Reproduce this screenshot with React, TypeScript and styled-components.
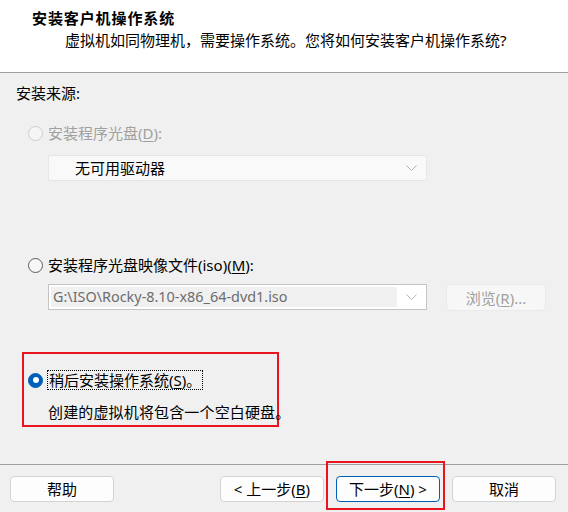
import React from "react";
import styled, { createGlobalStyle } from "styled-components";

const Global = createGlobalStyle`
  html, body { margin: 0; padding: 0; background: #f0f0f0; }
  body {
    font-family: "Noto Sans", "Noto Sans CJK SC", sans-serif;
    font-size: 15px;
    color: #000;
  }
  * { box-sizing: border-box; }
`;

const Window = styled.div`
  width: 568px;
  height: 512px;
  display: flex;
  flex-direction: column;
  background: #f0f0f0;
  overflow: hidden;
`;

const Header = styled.header`
  flex: none;
  height: 73px;
  background: #fff;
  border-bottom: 1px solid #a0a0a0;
  padding-top: 8px;
  display: flex;
  flex-direction: column;
  gap: 2px;
`;

const Title = styled.div`
  padding-left: 32px;
  font-weight: 700;
  font-size: 15px;
  letter-spacing: 0.9px;
  line-height: 20px;
`;

const Subtitle = styled.div`
  padding-left: 65px;
  line-height: 20px;
`;

const Body = styled.main`
  flex: 1;
  padding: 10px 16px 0;
  display: flex;
  flex-direction: column;
`;

const Label = styled.div`
  line-height: 20px;
`;

const RadioRow = styled.div<{ $top: number; $disabled?: boolean }>`
  margin-top: ${(p) => p.$top}px;
  padding-left: 12px;
  height: 20px;
  display: flex;
  align-items: center;
  gap: 5px;
  line-height: 20px;
  color: ${(p) => (p.$disabled ? "#a0a0a0" : "#000")};
  white-space: nowrap;
`;

const Radio = styled.span<{ $checked?: boolean; $disabled?: boolean }>`
  flex: none;
  width: 15px;
  height: 15px;
  border-radius: 50%;
  border: 1px solid
    ${(p) => (p.$checked ? "#005fb8" : p.$disabled ? "#cccccc" : "#5a5a5a")};
  background: ${(p) => (p.$checked ? "#005fb8" : p.$disabled ? "#f5f5f5" : "#f7f7f7")};
  display: flex;
  align-items: center;
  justify-content: center;
  &::after {
    content: "";
    display: ${(p) => (p.$checked ? "block" : "none")};
    width: 6px;
    height: 6px;
    border-radius: 50%;
    background: #fff;
  }
`;

const Key = styled.span`
  text-decoration: underline;
  text-underline-offset: 2px;
`;

const DisabledCombo = styled.div`
  margin: 12px 0 0 32px;
  width: 379px;
  height: 26px;
  background: #f9f9f9;
  border: 1px solid #e6e6e6;
  border-radius: 2px;
  display: flex;
  align-items: center;
  padding: 0 9px 0 26px;
  line-height: 20px;
  color: #000;
`;

const ComboText = styled.span`
  flex: 1;
`;

const ComboRow = styled.div`
  margin-top: 9px;
  padding-left: 32px;
  display: flex;
  align-items: flex-start;
  gap: 19px;
`;

const IsoCombo = styled.div`
  width: 379px;
  height: 26px;
  background: #fff;
  border: 1px solid #c4c4c4;
  display: flex;
  align-items: stretch;
  padding: 2px 9px 2px 2px;
  gap: 9px;
`;

const IsoField = styled.div`
  flex: 1;
  background: #f0f0f0;
  color: #6d6d6d;
  line-height: 20px;
  padding-left: 2px;
  white-space: nowrap;
  overflow: hidden;
  font-size: 14.4px;
`;

const Chevron = styled.svg`
  flex: none;
  align-self: center;
`;

const BrowseButton = styled.div`
  width: 100px;
  height: 27px;
  background: #f7f7f7;
  border: 1px solid #eaeaea;
  border-radius: 4px;
  color: #a0a0a0;
  display: flex;
  align-items: center;
  justify-content: center;
  line-height: 20px;
`;

const Highlight = styled.div`
  margin: 41px 0 0 6px;
  width: 257px;
  height: 75px;
  border: 2px solid #e8141e;
  padding: 16px 0 0 4px;
  display: flex;
  flex-direction: column;
  white-space: nowrap;
`;

const ChoiceRow = styled.div`
  height: 20px;
  display: flex;
  align-items: center;
  gap: 4px;
`;

const FocusText = styled.span`
  border: 1px dotted #000;
  line-height: 18px;
  padding: 0 1px;
`;

const Desc = styled.div`
  margin: 12px 0 0 20px;
  line-height: 20px;
  letter-spacing: 0.15px;
`;

const Footer = styled.footer`
  flex: none;
  height: 48px;
  border-top: 1px solid #a0a0a0;
  padding: 11px 12px 0 10px;
  display: flex;
  align-items: flex-start;
  gap: 12px;
`;

const Spacer = styled.div`
  flex: 1;
`;

const Button = styled.div<{ $primary?: boolean }>`
  position: relative;
  width: 104px;
  height: 26px;
  background: #fdfdfd;
  border: 1px solid ${(p) => (p.$primary ? "#005fb8" : "#d3d3d3")};
  border-radius: 4px;
  display: flex;
  align-items: center;
  justify-content: center;
  line-height: 20px;
  white-space: pre;
`;

const Marker = styled.div`
  position: absolute;
  top: -16px;
  left: -11px;
  right: -6px;
  bottom: -9px;
  border: 2px solid #e8141e;
  pointer-events: none;
`;

const ChevronIcon = ({ color }: { color: string }) => (
  <Chevron width="11" height="6" viewBox="0 0 11 6">
    <polyline points="0.5,0.5 5.5,5.5 10.5,0.5" fill="none" stroke={color} strokeWidth="1" />
  </Chevron>
);

export default function App() {
  return (
    <>
      <Global />
      <Window>
        <Header>
          <Title>安装客户机操作系统</Title>
          <Subtitle>虚拟机如同物理机，需要操作系统。您将如何安装客户机操作系统?</Subtitle>
        </Header>
        <Body>
          <Label>安装来源:</Label>
          <RadioRow $top={20} $disabled>
            <Radio $disabled />
            <span>
              安装程序光盘(<Key>D</Key>):
            </span>
          </RadioRow>
          <DisabledCombo>
            <ComboText>无可用驱动器</ComboText>
            <ChevronIcon color="#b0b0b0" />
          </DisabledCombo>
          <RadioRow $top={74}>
            <Radio />
            <span>
              安装程序光盘映像文件(iso)(<Key>M</Key>):
            </span>
          </RadioRow>
          <ComboRow>
            <IsoCombo>
              <IsoField>G:\ISO\Rocky-8.10-x86_64-dvd1.iso</IsoField>
              <ChevronIcon color="#b8b8b8" />
            </IsoCombo>
            <BrowseButton>
              浏览(<Key>R</Key>)...
            </BrowseButton>
          </ComboRow>
          <Highlight>
            <ChoiceRow>
              <Radio $checked />
              <FocusText>
                稍后安装操作系统(<Key>S</Key>)。
              </FocusText>
            </ChoiceRow>
            <Desc>创建的虚拟机将包含一个空白硬盘。</Desc>
          </Highlight>
        </Body>
        <Footer>
          <Button>帮助</Button>
          <Spacer />
          <Button>
            {"< 上一步("}
            <Key>B</Key>)
          </Button>
          <Button $primary>
            下一步(<Key>N</Key>
            {") >"}
            <Marker />
          </Button>
          <Button>取消</Button>
        </Footer>
      </Window>
    </>
  );
}
